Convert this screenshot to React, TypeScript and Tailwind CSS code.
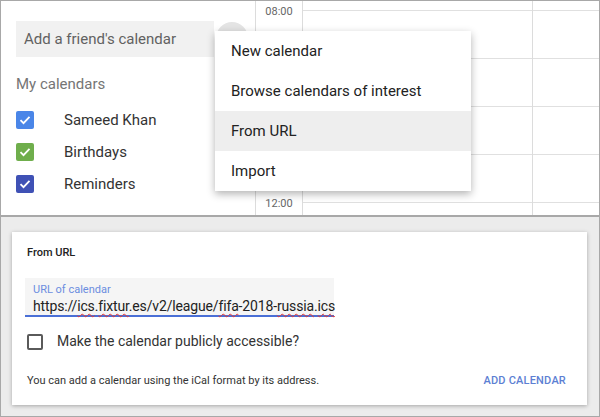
import React from 'react';

const calendars = [
  { name: 'Sameed Khan', color: 'bg-[#4a86e8]' },
  { name: 'Birthdays', color: 'bg-[#6fae4c]' },
  { name: 'Reminders', color: 'bg-[#3f51b5]' },
];

// only 08:00 and 12:00 peek out from behind the menu
const hours = ['08:00', '', '', '', '12:00'];
const menuItems = ['New calendar', 'Browse calendars of interest', 'From URL', 'Import'];

function Check() {
  return (
    <svg viewBox="0 0 18 18" className="w-[18px] h-[18px]">
      <path d="M4.5 9.2l3 3 6-6.4" fill="none" stroke="white" strokeWidth="1.8" />
    </svg>
  );
}

function Squiggle({ children }: { children: React.ReactNode }) {
  return <span className="underline decoration-wavy decoration-[#e53935] decoration-1 underline-offset-2">{children}</span>;
}

export default function App() {
  return (
    <div className="w-[600px] h-[417px] bg-white font-['Roboto',sans-serif] overflow-hidden">
      {/* calendar view with menu open */}
      <div className="relative h-[216px] border border-[#a8a8a8] flex">
        <div className="w-[255px] border-r border-[#dcdcdc] pl-[15px] pt-[20px]">
          <div className="w-[198px] h-[36px] bg-[#f1f1f1] flex items-center px-2 text-[15px] text-[#616161]">
            Add a friend's calendar
          </div>
          <div className="mt-[17px] text-[15px] leading-5 text-[#757575]">My calendars</div>
          <div className="mt-[10px]">
            {calendars.map((c) => (
              <div key={c.name} className="h-[32px] flex items-center">
                <div className={`w-[18px] h-[18px] rounded-[2px] ${c.color}`}>
                  <Check />
                </div>
                <span className="ml-[30px] text-[15px] text-[#333]">{c.name}</span>
              </div>
            ))}
          </div>
        </div>
        <div className="w-[47px] border-r border-[#dcdcdc] pt-[3px]">
          {hours.map((h, i) => (
            <div key={i} className="h-[48px] text-[11px] leading-4 text-center text-[#666]">
              {h}
            </div>
          ))}
        </div>
        <div className="w-[230px] border-r border-[#dcdcdc] pt-[9px]">
          {hours.map((_, i) => (
            <div key={i} className="h-[48px] border-t border-[#e0e0e0]" />
          ))}
        </div>
        <div className="flex-1 pt-[9px]">
          {hours.map((_, i) => (
            <div key={i} className="h-[48px] border-t border-[#e0e0e0]" />
          ))}
        </div>

        <div className="absolute left-[215px] top-[21px] w-8 h-8 rounded-full bg-[#e4e4e4]" />
        <div className="absolute left-[214px] top-[30px] w-[256px] bg-white shadow-[0_3px_8px_rgba(0,0,0,0.3)]">
          {menuItems.map((m) => (
            <div
              key={m}
              className={`h-10 flex items-center pl-4 text-[15px] text-[#222] ${m === 'From URL' ? 'bg-[#eeeeee]' : ''}`}
            >
              {m}
            </div>
          ))}
        </div>
      </div>

      {/* from url dialog */}
      <div className="h-[201px] bg-[#ececec] border border-[#a8a8a8] pl-[11px] pt-[15px]">
        <div className="w-[575px] h-[173px] bg-white shadow-[0_1px_4px_rgba(0,0,0,0.3)] pl-[15px] pr-[21px] pt-[14px]">
          <div className="text-[11px] leading-[14px] font-medium text-[#222]">From URL</div>
          <div className="ml-[-2px] mt-[18px] w-[309px] h-[39px] bg-[#f5f5f5] border-b-2 border-[#4a6fd6] pl-2 pt-[5px]">
            <div className="text-[11px] leading-[14px] text-[#6b8de0]">URL of calendar</div>
            <div className="text-[14px] leading-[18px] text-[#222] whitespace-nowrap tracking-[-0.15px]">
              https://<Squiggle>ics</Squiggle>.<Squiggle>fixtur</Squiggle>.es/v2/league/<Squiggle>fifa</Squiggle>-2018-<Squiggle>russia</Squiggle>.<Squiggle>ics</Squiggle>
            </div>
          </div>
          <div className="mt-[14px] flex items-center">
            <div className="w-4 h-4 rounded-[2px] border-2 border-[#5a5a5a]" />
            <span className="ml-[14px] text-[14px] text-[#333]">Make the calendar publicly accessible?</span>
          </div>
          <div className="mt-[22px] flex items-center justify-between">
            <span className="text-[11px] leading-[14px] text-[#333]">You can add a calendar using the iCal format by its address.</span>
            <span className="text-[11px] leading-[14px] font-medium text-[#5d7fd3] tracking-[0.2px]">ADD CALENDAR</span>
          </div>
        </div>
      </div>
    </div>
  );
}
